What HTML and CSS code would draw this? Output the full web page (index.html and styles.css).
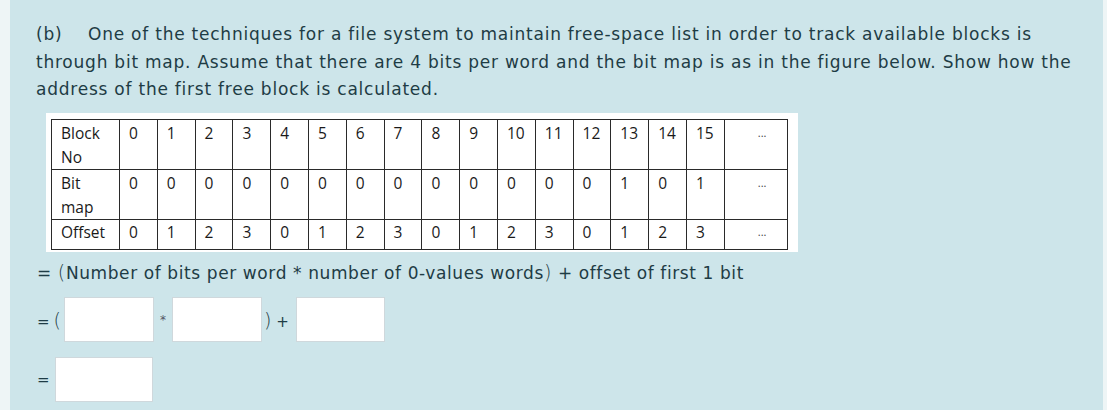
FILE: index.html
```html
<!DOCTYPE html>
<html>
<head>
<meta charset="utf-8">
<link rel="stylesheet" href="styles.css">
</head>
<body>
<div class="card">
  <p class="question"><span class="label">(b)</span>One of the techniques for a file system to maintain free-space list in order to track available blocks is<br>through bit map. Assume that there are 4 bits per word and the bit map is as in the figure below. Show how the<br>address of the first free block is calculated.</p>
  <div class="figure">
    <table class="bitmap">
      <colgroup>
        <col class="c-head">
        <col class="c-n"><col class="c-n"><col class="c-n"><col class="c-n"><col class="c-n"><col class="c-n"><col class="c-n"><col class="c-n">
        <col class="c-n"><col class="c-n"><col class="c-n"><col class="c-n"><col class="c-n"><col class="c-n"><col class="c-n"><col class="c-n">
        <col class="c-more">
      </colgroup>
      <tr class="r2">
        <td>Block<br>No</td>
        <td>0</td><td>1</td><td>2</td><td>3</td><td>4</td><td>5</td><td>6</td><td>7</td><td>8</td><td>9</td><td>10</td><td>11</td><td>12</td><td>13</td><td>14</td><td>15</td><td class="more">...</td>
      </tr>
      <tr class="r2">
        <td>Bit<br>map</td>
        <td>0</td><td>0</td><td>0</td><td>0</td><td>0</td><td>0</td><td>0</td><td>0</td><td>0</td><td>0</td><td>0</td><td>0</td><td>0</td><td>1</td><td>0</td><td>1</td><td class="more">...</td>
      </tr>
      <tr class="r1">
        <td>Offset</td>
        <td>0</td><td>1</td><td>2</td><td>3</td><td>0</td><td>1</td><td>2</td><td>3</td><td>0</td><td>1</td><td>2</td><td>3</td><td>0</td><td>1</td><td>2</td><td>3</td><td class="more">...</td>
      </tr>
    </table>
  </div>
  <p class="formula">= <span class="paren">(</span>Number of bits per word * number of 0-values words<span class="paren">)</span> + offset of first 1 bit</p>
  <div class="calc-row">
    <span class="op">=<span class="paren open">(</span></span>
    <input class="box b1" type="text">
    <span class="op star">*</span>
    <input class="box b2" type="text">
    <span class="op close"><span class="paren">)</span> +</span>
    <input class="box b3" type="text">
  </div>
  <div class="calc-row last">
    <span class="op eq">=</span>
    <input class="box b4" type="text">
  </div>
</div>
</body>
</html>
```
FILE: styles.css
```css
html, body {
  margin: 0;
  padding: 0;
  background: #eef5f6;
}
body {
  padding: 0 4px 0 10px;
  height: 410px;
  overflow: hidden;
}
.card {
  background: #cde5ea;
  height: 410px;
  padding: 21px 0 0 26px;
  box-sizing: border-box;
  color: #1e3c45;
  font-family: "DejaVu Sans", "Open Sans", sans-serif;
}
.question {
  margin: 0;
  font-size: 17px;
  letter-spacing: 0.77px;
  line-height: 27.5px;
  white-space: nowrap;
}
.label {
  display: inline-block;
  width: 52px;
}
.figure {
  display: inline-block;
  background: #ffffff;
  margin: 9px 0 0 10px;
  padding: 6px 10px 2px 5px;
}
.bitmap {
  border-collapse: collapse;
  table-layout: fixed;
  width: 736px;
  font-family: "Open Sans", "Liberation Sans", sans-serif;
  font-size: 15.5px;
  line-height: 24px;
  color: #1a1a1a;
}
.c-head { width: 68px; }
.c-n { width: 37.8px; }
.c-more { width: 63px; }
.bitmap td {
  border: 1px solid #2a2a2a;
  vertical-align: top;
  padding: 0 0 0 9px;
  white-space: nowrap;
}
.bitmap td.more {
  padding-left: 33px;
  font-size: 11px;
  color: #444;
}
.bitmap tr.r2 td { height: 48px; padding-top: 1px; }
.bitmap tr.r1 td { height: 29px; }
.formula {
  margin: 3px 0 0 1px;
  font-size: 17px;
  letter-spacing: 0.6px;
  line-height: 27.5px;
}
.paren {
  font-family: "DejaVu Sans", sans-serif;
  font-size: 19px;
  font-weight: 300;
}
.calc-row {
  display: flex;
  align-items: center;
  margin: 10px 0 0 1px;
  font-size: 15px;
}
.calc-row.last {
  margin-top: 15px;
}
.op {
  display: inline-block;
  white-space: nowrap;
}
.paren.open { margin-left: 4px; }
.op.star { margin: 0 6px 0 6px; font-size: 12px; color: #556; }
.op.close { margin: 0 7px 0 2px; }
.op.eq { margin-right: 5px; }
.box {
  height: 45px;
  box-sizing: border-box;
  border: 1px solid #cfd8dc;
  background: #ffffff;
  margin: 0;
  padding: 0;
  outline: none;
}
.b1 { width: 90px; margin-left: 3px; }
.b2 { width: 90px; }
.b3 { width: 89px; }
.b4 { width: 98px; }
```
